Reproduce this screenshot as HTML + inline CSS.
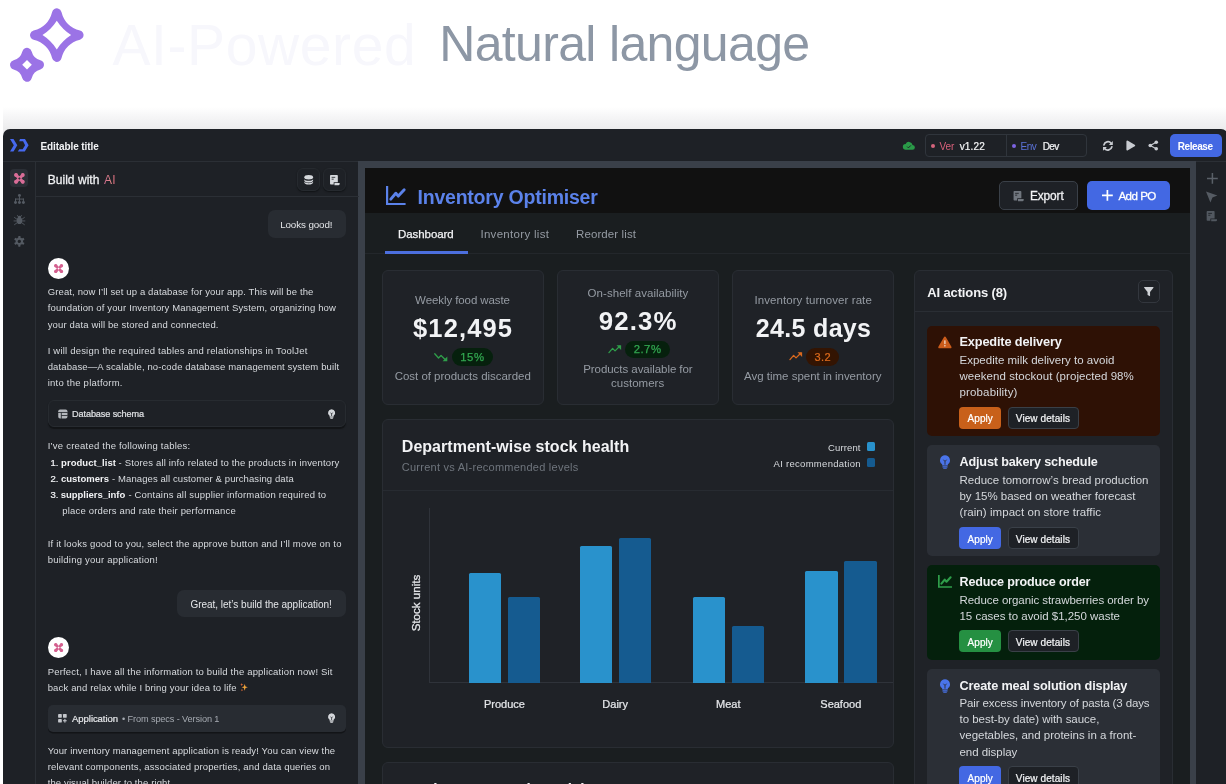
<!DOCTYPE html>
<html lang="en">
<head>
<meta charset="utf-8">
<title>AI-Powered Natural language</title>
<style>
*{box-sizing:border-box;margin:0;padding:0}
html,body{width:1226px;height:784px;overflow:hidden;background:#fff}
body{font-family:"Liberation Sans",sans-serif;color:#e6e8eb;position:relative}
.a{position:absolute}
.t{position:absolute;white-space:nowrap;line-height:1}
svg{overflow:visible}
#root{position:absolute;left:0;top:0;width:1226px;height:784px;overflow:hidden;will-change:transform}
</style>
</head>
<body>
<div id="root">
<svg class="a" style="left:0;top:0" width="100" height="95" viewBox="0 0 100 95">
<g fill="#9b73e6" stroke="#9b73e6" stroke-width="9.6" stroke-linejoin="round">
<path transform="translate(56.8 35.1)" d="M0-22Q4.5-4.5 22 0Q4.5 4.5 0 22Q-4.5 4.5-22 0Q-4.5-4.5 0-22Z"/>
<path transform="translate(27 64.8)" d="M0-12.2Q2.5-2.5 12.2 0Q2.5 2.5 0 12.2Q-2.5 2.5-12.2 0Q-2.5-2.5 0-12.2Z"/></g>
<g fill="#fff"><path transform="translate(56.8 35.1)" d="M0-14.3Q5.6-5.6 14.3 0Q5.6 5.6 0 14.3Q-5.6 5.6-14.3 0Q-5.6-5.6 0-14.3Z"/>
<path transform="translate(27 64.8)" d="M0-4.8L4.8 0L0 4.8L-4.8 0Z"/></g></svg>
<div class="t" style="left:112.40px;top:17px;font-size:57px;color:#f7f7fc;letter-spacing:0.610px;">AI-Powered</div>
<div class="t" style="left:439.20px;top:19px;font-size:50px;color:#8d97a5;letter-spacing:-0.663px;">Natural language</div>
<div class="a" style="left:3px;top:107px;width:1226px;height:26px;background:linear-gradient(#fff 0%,#f5f5f6 40%,#ececed 85%)"></div>
<div class="a" style="left:3px;top:129px;width:1225px;height:700px;background:#1e2126;border-radius:7px 7px 0 0"></div>
<div class="a" style="left:3px;top:161px;width:1223px;height:1px;background:#2b2f35;"></div>
<div class="a" style="left:35px;top:162px;width:1px;height:622px;background:#2b2f35;"></div>
<div class="a" style="left:358.2px;top:161.2px;width:837.8px;height:622.8px;background:#3a4049;"></div>
<div class="a" style="left:365px;top:168px;width:825px;height:616px;background:#1a1e20;"></div>
<div class="a" style="left:365px;top:168px;width:825px;height:45px;background:#111111;"></div>
<svg class="a" style="left:9.8px;top:139.2px;" width="18.6" height="12.4" viewBox="0 0 18.6 12.4"><g fill="#4669ee"><path d="M0 0H3.5L7.3 6.2L3.5 12.4H0L3.8 6.2Z"/><path d="M10 0H15L18.6 6.2L14.8 12.4H7.8L9.3 10.2H12.7L15.1 6.2L13.1 2.3H9.2Z"/></g></svg>
<div class="t" style="left:40.50px;top:142px;font-size:10px;color:#f2f3f5;letter-spacing:-0.096px;"><span style="font-weight:700;">Editable title</span></div>
<svg class="a" style="left:903.1px;top:140.5px;" width="11.8" height="9.8" viewBox="0 0 24 18"><path fill="#2a9a48" d="M19.4 7A7.5 7.5 0 0 0 5.3 5 6 6 0 0 0 6 17h13a5 5 0 0 0 .4-10z"/><path fill="none" stroke="#1e2126" stroke-width="2" d="M8.5 10.5l2.5 2.5 5-5"/></svg>
<div class="a" style="left:925px;top:134px;width:162px;height:22.5px;border:1px solid #30353c;border-radius:4px;"></div>
<div class="a" style="left:1006px;top:134px;width:1px;height:22.5px;background:#30353c;"></div>
<div class="a" style="left:931.4px;top:143.6px;width:4px;height:4px;background:#d4647c;border-radius:3px;"></div>
<div class="t" style="left:939.40px;top:142px;font-size:10px;color:#d9607a;letter-spacing:-0.058px;">Ver</div>
<div class="t" style="left:959.70px;top:142px;font-size:10px;color:#f2f3f5;letter-spacing:0.158px;"><span style="-webkit-text-stroke:0.22px currentColor;">v1.22</span></div>
<div class="a" style="left:1012.4px;top:143.6px;width:4px;height:4px;background:#7d63e2;border-radius:3px;"></div>
<div class="t" style="left:1020.60px;top:142px;font-size:10px;color:#5b72d8;letter-spacing:-0.567px;">Env</div>
<div class="t" style="left:1042.70px;top:142px;font-size:10px;color:#f2f3f5;letter-spacing:-0.548px;"><span style="-webkit-text-stroke:0.22px currentColor;">Dev</span></div>
<svg class="a" style="left:1102.2px;top:139.6px;" width="11.8" height="11.8" viewBox="0 0 24 24"><g transform="translate(24 0) scale(-1 1)"><g fill="none" stroke="#c9ccd1" stroke-width="3.6" stroke-linecap="round"><path d="M20 10A8.3 8.3 0 0 0 5.5 6.5"/><path d="M4 14a8.3 8.3 0 0 0 14.5 3.5"/></g><path fill="#c9ccd1" d="M2 2v8h8zM22 22v-8h-8z"/></g></svg>
<svg class="a" style="left:1125.7px;top:140px;" width="9.5" height="11" viewBox="0 0 9.5 11"><path fill="#c9ccd1" stroke="#c9ccd1" stroke-width="2" stroke-linejoin="round" d="M1.4 1.6L8.2 5.5L1.4 9.4Z"/></svg>
<svg class="a" style="left:1148px;top:140px;" width="10.5" height="11" viewBox="0 0 21 22"><g fill="#c9ccd1"><circle cx="16.5" cy="4.5" r="3.6"/><circle cx="16.5" cy="17.5" r="3.6"/><circle cx="4.5" cy="11" r="3.6"/></g><path fill="none" stroke="#c9ccd1" stroke-width="2.4" d="M16.5 4.5L4.5 11L16.5 17.5"/></svg>
<div class="a" style="left:1169.5px;top:134px;width:52px;height:23px;background:#4368e3;border-radius:5px;"></div>
<div class="t" style="left:1177.70px;top:142px;font-size:10px;color:#ffffff;letter-spacing:-0.419px;"><span style="font-weight:700;">Release</span></div>
<div class="a" style="left:9.7px;top:169.3px;width:18.8px;height:18.2px;background:#2b2f36;border-radius:4px;"></div>
<svg class="a" style="left:14px;top:172.8px;" width="10.8" height="10.8" viewBox="0 0 12 12"><g fill="none" stroke="#d96d97" stroke-width="3.4" stroke-linecap="round"><path d="M2.2 2.2L9.800 9.800M9.800 2.200L2.200 9.800"/></g><g fill="#d96d97"><circle cx="2.300" cy="2.300" r="2.200"/><circle cx="9.700" cy="2.300" r="2.200"/><circle cx="2.300" cy="9.700" r="2.200"/><circle cx="9.700" cy="9.700" r="2.200"/></g><rect x="5" y="5" width="2" height="2" fill="#2b2f36" transform="rotate(45 6 6)"/></svg>
<svg class="a" style="left:13.9px;top:193.8px;" width="10.9" height="10.2" viewBox="0 0 22 20.5"><g fill="#555b63"><circle cx="11" cy="3" r="3"/><circle cx="3" cy="17.300" r="3"/><circle cx="11" cy="17.300" r="3"/><circle cx="19" cy="17.300" r="3"/><rect x="10" y="5" width="2" height="10"/><rect x="2" y="9.200" width="18" height="2"/><rect x="2" y="9.200" width="2" height="6"/><rect x="18" y="9.200" width="2" height="6"/></g></svg>
<svg class="a" style="left:13.9px;top:215px;" width="10.9" height="10.4" viewBox="0 0 22 21"><g fill="#555b63"><ellipse cx="11" cy="11.500" rx="5.600" ry="6.800"/><circle cx="11" cy="4.600" r="3"/></g><g stroke="#555b63" stroke-width="1.800" stroke-linecap="round"><path d="M1 5l5.500 4M21 5l-5.500 4M0 12h6M22 12h-6M1 19.500l5.500-4M21 19.500l-5.500-4M7 1l2 3M15 1l-2 3"/></g></svg>
<svg class="a" style="left:14.1px;top:236px;" width="10.7" height="10.7" viewBox="0 0 22 22"><g fill="none" stroke="#545a62"><circle cx="11" cy="11" r="5.600" stroke-width="4.200"/></g><g fill="#545a62"><rect x="8.700" y="0" width="4.600" height="4.600" rx="1" transform="rotate(0 11 11)"/><rect x="8.700" y="0" width="4.600" height="4.600" rx="1" transform="rotate(60 11 11)"/><rect x="8.700" y="0" width="4.600" height="4.600" rx="1" transform="rotate(120 11 11)"/><rect x="8.700" y="0" width="4.600" height="4.600" rx="1" transform="rotate(180 11 11)"/><rect x="8.700" y="0" width="4.600" height="4.600" rx="1" transform="rotate(240 11 11)"/><rect x="8.700" y="0" width="4.600" height="4.600" rx="1" transform="rotate(300 11 11)"/></g></svg>
<div class="a" style="left:36px;top:196px;width:322.6px;height:1px;background:#2b2f35;"></div>
<div class="t" style="left:47.70px;top:174px;font-size:12px;color:#f2f3f5;letter-spacing:0.038px;"><span style="-webkit-text-stroke:0.26px currentColor;">Build with</span></div>
<div class="t" style="left:103.9px;top:173.8px;font-size:12px;letter-spacing:0.3px;background:linear-gradient(90deg,#c96a8e,#e98a8a 60%,#d9607a);-webkit-background-clip:text;background-clip:text;color:transparent">AI</div>
<div class="a" style="left:297px;top:168px;width:23px;height:23px;background:#1e2126;border:1px solid #262a2f;border-radius:6px;box-shadow:0 1px 1.5px #111316;"></div>
<div class="a" style="left:323px;top:168px;width:23px;height:23px;background:#1e2126;border:1px solid #262a2f;border-radius:6px;box-shadow:0 1px 1.5px #111316;"></div>
<svg class="a" style="left:303.9px;top:174.6px;" width="9.4" height="9.7" viewBox="0 0 18 19"><g fill="#d5d8dc"><ellipse cx="9" cy="4.6" rx="8.6" ry="4.4"/><path d="M.4 8.2c1 2 4.400 3.200 8.600 3.200s7.600-1.200 8.600-3.200v2.600c0 2.200-3.800 4-8.600 4s-8.600-1.800-8.600-4z"/><path d="M.4 12.800c1 2 4.400 3.200 8.600 3.200s7.600-1.200 8.600-3.200v2c0 2.200-3.800 4-8.600 4s-8.600-1.800-8.600-4z"/></g></svg>
<svg class="a" style="left:328.8px;top:174.8px;" width="10.4" height="10.4" viewBox="0 0 20 20"><g fill="#d5d8dc"><path d="M3.500 0h12a1.500 1.500 0 0 1 1.500 1.500v12.500h-8v4.500h-5.500a1.500 1.500 0 0 1-1.500-1.500v-15.500a1.500 1.500 0 0 1 1.500-1.500z"/><path d="M10.500 15.500h10v1.600a2.400 2.400 0 0 1-2.400 2.400h-7.600z"/></g><g stroke="#1e2126" stroke-width="1.600"><path d="M5 4.500h7M5 8h4"/></g></svg>
<div class="a" style="left:267.5px;top:210.4px;width:78.2px;height:27.3px;background:#282c32;border-radius:7px;"></div>
<div class="t" style="left:280.20px;top:220px;font-size:9.82px;color:#e4e6e9;letter-spacing:-0.120px;">Looks good!</div>
<div class="a" style="left:48.3px;top:258.1px;width:21.2px;height:21.2px;background:#ffffff;border-radius:11px;"></div>
<svg class="a" style="left:54.3px;top:264.1px;" width="9.2" height="9.2" viewBox="0 0 12 12"><g fill="none" stroke="#d4608f" stroke-width="3.4" stroke-linecap="round"><path d="M2.2 2.2L9.800 9.800M9.800 2.200L2.200 9.800"/></g><g fill="#d4608f"><circle cx="2.300" cy="2.300" r="2.200"/><circle cx="9.700" cy="2.300" r="2.200"/><circle cx="2.300" cy="9.700" r="2.200"/><circle cx="9.700" cy="9.700" r="2.200"/></g><rect x="5" y="5" width="2" height="2" fill="#ffffff" transform="rotate(45 6 6)"/></svg>
<div class="t" style="left:47.70px;top:287px;font-size:9.5px;color:#d8dbdf;letter-spacing:0.130px;">Great, now I’ll set up a database for your app. This will be the</div>
<div class="t" style="left:47.70px;top:303px;font-size:9.5px;color:#d8dbdf;letter-spacing:0.145px;">foundation of your Inventory Management System, organizing how</div>
<div class="t" style="left:47.70px;top:320px;font-size:9.5px;color:#d8dbdf;letter-spacing:0.144px;">your data will be stored and connected.</div>
<div class="t" style="left:47.70px;top:346px;font-size:9.5px;color:#d8dbdf;letter-spacing:0.198px;">I will design the required tables and relationships in ToolJet</div>
<div class="t" style="left:47.70px;top:362px;font-size:9.5px;color:#d8dbdf;letter-spacing:0.121px;">database—A scalable, no-code database management system built</div>
<div class="t" style="left:47.70px;top:378px;font-size:9.5px;color:#d8dbdf;letter-spacing:0.237px;">into the platform.</div>
<div class="a" style="left:47.7px;top:400.3px;width:298px;height:27.1px;background:#1e2126;border:1px solid #272b30;border-radius:6px;box-shadow:0 1.5px 1px #121417;"></div>
<svg class="a" style="left:58.3px;top:408.9px;" width="9.7" height="10" viewBox="0 0 19 19"><rect x="0.500" y="0.500" width="18" height="18" rx="3.500" fill="#b4b7bc"/><g stroke="#1e2126" stroke-width="1.600"><path d="M0 6.500h19M6.500 6.500v12.500M6.500 12.500h12.500"/></g></svg>
<div class="t" style="left:72.10px;top:410px;font-size:9.14px;color:#dfe1e4;letter-spacing:-0.114px;"><span style="-webkit-text-stroke:0.20px currentColor;">Database schema</span></div>
<svg class="a" style="left:328.2px;top:408.7px;" width="7.2" height="10.4" viewBox="0 0 14 19"><path fill="#d5d8dc" d="M7 0a7 7 0 0 0-4 12.700v1.800h8v-1.800a7 7 0 0 0-4-12.700z"/><rect x="3.300" y="15.600" width="7.400" height="1.700" rx=".8" fill="#d5d8dc"/><rect x="4.500" y="17.600" width="5" height="1.400" rx=".7" fill="#d5d8dc"/><path d="M5 6.500l2 2.500 2-2.500M7 9v4" stroke="#1e2126" stroke-width="1.500" fill="none"/></svg>
<div class="t" style="left:47.70px;top:441px;font-size:9.5px;color:#d8dbdf;letter-spacing:0.218px;">I’ve created the following tables:</div>
<div class="t" style="left:50.40px;top:458px;font-size:9.5px;color:#f2f3f5;letter-spacing:0.040px;"><span style="-webkit-text-stroke:0.21px currentColor;color:#f2f3f5;">1. </span><span style="font-weight:700;color:#f2f3f5;">product_list</span></div>
<div class="t" style="left:118.60px;top:458px;font-size:9.5px;color:#d8dbdf;letter-spacing:0.169px;">- Stores all info related to the products in inventory</div>
<div class="t" style="left:50.40px;top:474px;font-size:9.5px;color:#f2f3f5;"><span style="-webkit-text-stroke:0.21px currentColor;color:#f2f3f5;">2. </span><span style="font-weight:700;color:#f2f3f5;">customers</span></div>
<div class="t" style="left:112.00px;top:474px;font-size:9.5px;color:#d8dbdf;letter-spacing:0.096px;">- Manages all customer &amp; purchasing data</div>
<div class="t" style="left:50.40px;top:490px;font-size:9.5px;color:#f2f3f5;letter-spacing:-0.044px;"><span style="-webkit-text-stroke:0.21px currentColor;color:#f2f3f5;">3. </span><span style="font-weight:700;color:#f2f3f5;">suppliers_info</span></div>
<div class="t" style="left:128.40px;top:490px;font-size:9.5px;color:#d8dbdf;letter-spacing:0.188px;">- Contains all supplier information required to</div>
<div class="t" style="left:62.30px;top:506px;font-size:9.5px;color:#d8dbdf;letter-spacing:0.172px;">place orders and rate their performance</div>
<div class="t" style="left:47.70px;top:539px;font-size:9.5px;color:#d8dbdf;letter-spacing:0.178px;">If it looks good to you, select the approve button and I’ll move on to</div>
<div class="t" style="left:47.70px;top:555px;font-size:9.5px;color:#d8dbdf;letter-spacing:0.217px;">building your application!</div>
<div class="a" style="left:177.4px;top:589.5px;width:168.3px;height:27.8px;background:#282c32;border-radius:7px;"></div>
<div class="t" style="left:190.40px;top:600px;font-size:10px;color:#e4e6e9;letter-spacing:-0.018px;">Great, let’s build the application!</div>
<div class="a" style="left:48.3px;top:637.2px;width:21.2px;height:21.2px;background:#ffffff;border-radius:11px;"></div>
<svg class="a" style="left:54.3px;top:643.2px;" width="9.2" height="9.2" viewBox="0 0 12 12"><g fill="none" stroke="#d4608f" stroke-width="3.4" stroke-linecap="round"><path d="M2.2 2.2L9.800 9.800M9.800 2.200L2.200 9.800"/></g><g fill="#d4608f"><circle cx="2.300" cy="2.300" r="2.200"/><circle cx="9.700" cy="2.300" r="2.200"/><circle cx="2.300" cy="9.700" r="2.200"/><circle cx="9.700" cy="9.700" r="2.200"/></g><rect x="5" y="5" width="2" height="2" fill="#ffffff" transform="rotate(45 6 6)"/></svg>
<div class="t" style="left:47.70px;top:667px;font-size:9.5px;color:#d8dbdf;letter-spacing:0.181px;">Perfect, I have all the information to build the application now! Sit</div>
<div class="t" style="left:47.70px;top:683px;font-size:9.5px;color:#d8dbdf;letter-spacing:0.147px;">back and relax while I bring your idea to life</div>
<svg class="a" style="left:239.9px;top:683.2px;" width="8" height="8.6" viewBox="0 0 17 19"><path fill="#f0a23a" d="M10 2l1.800 5.700 5.200 1.800-5.200 1.800L10 17l-1.800-5.700L3 9.500l5.200-1.800z"/><path fill="#e8703a" d="M3.500 0l.9 2.600 2.600.9-2.600.9-.9 2.600-.9-2.600L0 3.500l2.600-.9zM4 13l.7 2 2 .7-2 .7-.7 2-.7-2-2-.7 2-.7z"/></svg>
<div class="a" style="left:47.7px;top:705.2px;width:298px;height:27px;background:#282c32;border-radius:5px;box-shadow:0 1.5px 0 #121417;"></div>
<svg class="a" style="left:58.3px;top:714.2px;" width="9" height="8.8" viewBox="0 0 18 18"><g fill="#c4c7cc"><rect x="0" y="0" width="7.600" height="7.600" rx="1"/><rect x="10" y="0" width="7.600" height="7.600" rx="1"/><rect x="0" y="10" width="7.600" height="7.600" rx="1"/><rect x="12.800" y="10" width="2.200" height="7.600"/><rect x="10" y="12.700" width="7.600" height="2.200"/></g></svg>
<div class="t" style="left:72.10px;top:714px;font-size:9.5px;color:#e4e6e9;letter-spacing:-0.058px;"><span style="-webkit-text-stroke:0.21px currentColor;">Application</span></div>
<div class="t" style="left:122.00px;top:715px;font-size:9.18px;color:#a6abb2;letter-spacing:-0.114px;">• From specs - Version 1</div>
<svg class="a" style="left:328.2px;top:713.1px;" width="7.2" height="10.4" viewBox="0 0 14 19"><path fill="#d5d8dc" d="M7 0a7 7 0 0 0-4 12.700v1.800h8v-1.800a7 7 0 0 0-4-12.700z"/><rect x="3.300" y="15.600" width="7.400" height="1.700" rx=".8" fill="#d5d8dc"/><rect x="4.500" y="17.600" width="5" height="1.400" rx=".7" fill="#d5d8dc"/><path d="M5 6.500l2 2.500 2-2.500M7 9v4" stroke="#282c32" stroke-width="1.500" fill="none"/></svg>
<div class="t" style="left:47.70px;top:746px;font-size:9.5px;color:#d8dbdf;letter-spacing:0.133px;">Your inventory management application is ready! You can view the</div>
<div class="t" style="left:47.70px;top:762px;font-size:9.5px;color:#d8dbdf;letter-spacing:0.149px;">relevant components, associated properties, and data queries on</div>
<div class="t" style="left:47.70px;top:778px;font-size:9.5px;color:#d8dbdf;letter-spacing:0.120px;">the visual builder to the right.</div>
<svg class="a" style="left:386.4px;top:186.4px;" width="19.6" height="19.1" viewBox="0 0 19.6 19.1"><g fill="none" stroke="#5b82ea" stroke-width="2.200"><path d="M1.100 0V18H19.600"/><path d="M4.800 13.200L9.800 7.200L12.300 10.100L18.200 3.800" stroke-linejoin="round" stroke-linecap="round" stroke-width="2.900"/></g></svg>
<div class="t" style="left:417.50px;top:188px;font-size:19.5px;color:#5b82ea;letter-spacing:-0.218px;"><span style="font-weight:700;">Inventory Optimiser</span></div>
<div class="a" style="left:999px;top:181px;width:79px;height:29.3px;background:#1e2126;border:1px solid #3a4048;border-radius:5px;"></div>
<svg class="a" style="left:1012.7px;top:190.7px;" width="11" height="10.4" viewBox="0 0 21 20"><g fill="#70767e"><path d="M2.500 0h12a1.500 1.500 0 0 1 1.500 1.500v12.500h-8v4.500h-5.500a1.500 1.500 0 0 1-1.500-1.500v-15.500a1.500 1.500 0 0 1 1.500-1.500z"/><path d="M9.500 15.500h11v1.600a2.400 2.400 0 0 1-2.400 2.400h-8.600z"/></g><g stroke="#1e2126" stroke-width="1.600"><path d="M4 4.500h7M4 8h4"/></g></svg>
<div class="t" style="left:1030.00px;top:191px;font-size:11.91px;color:#f2f3f5;letter-spacing:-0.144px;"><span style="-webkit-text-stroke:0.26px currentColor;">Export</span></div>
<div class="a" style="left:1087.4px;top:181px;width:82.6px;height:29.3px;background:#4368e3;border-radius:5px;"></div>
<svg class="a" style="left:1101.5px;top:190.4px;" width="10.8" height="10.8" viewBox="0 0 10.8 10.8"><path d="M5.400 0V10.800M0 5.400H10.800" stroke="#fff" stroke-width="1.700"/></svg>
<div class="t" style="left:1118.40px;top:190px;font-size:11.6px;color:#ffffff;letter-spacing:-0.522px;"><span style="-webkit-text-stroke:0.26px currentColor;">Add PO</span></div>
<div class="a" style="left:365px;top:253px;width:825px;height:1px;background:#23272b;"></div>
<div class="a" style="left:384.5px;top:250.6px;width:83.2px;height:3.4px;background:#4c6fde;"></div>
<div class="t" style="left:398.00px;top:229px;font-size:11.5px;color:#f2f3f5;letter-spacing:-0.071px;"><span style="-webkit-text-stroke:0.25px currentColor;">Dashboard</span></div>
<div class="t" style="left:480.40px;top:229px;font-size:11.5px;color:#959ba3;letter-spacing:0.311px;">Inventory list</div>
<div class="t" style="left:576.00px;top:229px;font-size:11.5px;color:#959ba3;letter-spacing:0.108px;">Reorder list</div>
<svg class="a" style="left:1206.5px;top:172.7px;" width="10.8" height="10.8" viewBox="0 0 10.8 10.8"><path d="M5.400 0V10.800M0 5.400H10.800" stroke="#5a6068" stroke-width="1.500"/></svg>
<svg class="a" style="left:1206px;top:191.4px;" width="11.4" height="11.4" viewBox="0 0 22 22"><path fill="#555b63" d="M0 1L22 8.500L12.500 12.500L8.500 22Z"/></svg>
<svg class="a" style="left:1206px;top:211.4px;" width="11.4" height="10.6" viewBox="0 0 21 20"><g fill="#525860"><path d="M2.500 0h12a1.500 1.500 0 0 1 1.500 1.500v12.500h-8v4.500h-5.500a1.500 1.500 0 0 1-1.500-1.500v-15.500a1.500 1.500 0 0 1 1.500-1.500z"/><path d="M9.500 15.500h11v1.600a2.400 2.400 0 0 1-2.400 2.400h-8.600z"/></g><g stroke="#1e2126" stroke-width="1.600"><path d="M4 4.500h7M4 8h4"/></g></svg>
<div class="a" style="left:381.7px;top:270.2px;width:162.2px;height:135.2px;background:#1f2227;border:1px solid #292d33;border-radius:6px;"></div>
<div class="a" style="left:556.9px;top:270.2px;width:162.2px;height:135.2px;background:#1f2227;border:1px solid #292d33;border-radius:6px;"></div>
<div class="a" style="left:732.2px;top:270.2px;width:162.2px;height:135.2px;background:#1f2227;border:1px solid #292d33;border-radius:6px;"></div>
<div class="t" style="left:415.10px;top:295px;font-size:11.5px;color:#959ba3;letter-spacing:-0.088px;">Weekly food waste</div>
<div class="t" style="left:413.00px;top:316px;font-size:25.52px;color:#f2f3f5;letter-spacing:1.125px;"><span style="font-weight:700;">$12,495</span></div>
<svg class="a" style="left:433.9px;top:352.6px;" width="13.6" height="8.6" viewBox="0 0 27 17"><path fill="none" stroke="#2f9e4a" stroke-width="2.600" stroke-linejoin="round" stroke-linecap="round" d="M1.500 1.500L9 10L14 5L23.500 14.500"/><path fill="#2f9e4a" d="M26.500 7V16.500H17Z"/></svg>
<div class="a" style="left:451.5px;top:347.5px;width:41.4px;height:18px;background:#06200d;border-radius:9px;"></div>
<div class="t" style="left:460.30px;top:352px;font-size:11.34px;color:#32a750;letter-spacing:0.495px;"><span style="-webkit-text-stroke:0.25px currentColor;">15%</span></div>
<div class="t" style="left:394.70px;top:371px;font-size:11.5px;color:#959ba3;letter-spacing:-0.028px;">Cost of products discarded</div>
<div class="t" style="left:587.60px;top:288px;font-size:11.5px;color:#959ba3;letter-spacing:0.049px;">On-shelf availability</div>
<div class="t" style="left:598.70px;top:309px;font-size:25.85px;color:#f2f3f5;letter-spacing:1.125px;"><span style="font-weight:700;">92.3%</span></div>
<svg class="a" style="left:607.5px;top:345.1px;" width="13.6" height="8.3" viewBox="0 0 27 17"><path fill="none" stroke="#2f9e4a" stroke-width="2.600" stroke-linejoin="round" stroke-linecap="round" d="M1.500 15.500L9 7L14 12L23.500 2.500"/><path fill="#2f9e4a" d="M26.500 10V0.500H17Z"/></svg>
<div class="a" style="left:625.2px;top:340.7px;width:45.2px;height:17.7px;background:#06200d;border-radius:9px;"></div>
<div class="t" style="left:633.70px;top:344px;font-size:11.32px;color:#32a750;letter-spacing:0.495px;"><span style="-webkit-text-stroke:0.25px currentColor;">2.7%</span></div>
<div class="t" style="left:583.20px;top:364px;font-size:11.5px;color:#959ba3;letter-spacing:-0.052px;">Products available for</div>
<div class="t" style="left:611.00px;top:378px;font-size:11.5px;color:#959ba3;letter-spacing:0.019px;">customers</div>
<div class="t" style="left:754.40px;top:295px;font-size:11.5px;color:#959ba3;letter-spacing:0.077px;">Inventory turnover rate</div>
<div class="t" style="left:755.80px;top:316px;font-size:25px;color:#f2f3f5;letter-spacing:0.326px;"><span style="font-weight:700;">24.5 days</span></div>
<svg class="a" style="left:788.6px;top:352.3px;" width="13.6" height="8.3" viewBox="0 0 27 17"><path fill="none" stroke="#d9691e" stroke-width="2.600" stroke-linejoin="round" stroke-linecap="round" d="M1.500 15.500L9 7L14 12L23.500 2.500"/><path fill="#d9691e" d="M26.500 10V0.500H17Z"/></svg>
<div class="a" style="left:806.3px;top:348px;width:33.2px;height:17.7px;background:#331402;border-radius:9px;"></div>
<div class="t" style="left:814.60px;top:352px;font-size:11px;color:#dc6a1c;letter-spacing:0.402px;"><span style="-webkit-text-stroke:0.24px currentColor;">3.2</span></div>
<div class="t" style="left:744.10px;top:371px;font-size:11.5px;color:#959ba3;letter-spacing:-0.018px;">Avg time spent in inventory</div>
<div class="a" style="left:381.5px;top:418.6px;width:512.5px;height:329.1px;background:#1f2227;border:1px solid #292d33;border-radius:6px;"></div>
<div class="t" style="left:401.80px;top:439px;font-size:16px;color:#f2f3f5;letter-spacing:0.025px;"><span style="font-weight:700;">Department-wise stock health</span></div>
<div class="t" style="left:401.80px;top:462px;font-size:11px;color:#6f757d;letter-spacing:0.247px;">Current vs AI-recommended levels</div>
<div class="t" style="left:828.10px;top:443px;font-size:9.5px;color:#d8dbdf;letter-spacing:0.119px;">Current</div>
<div class="t" style="left:773.60px;top:459px;font-size:9.5px;color:#d8dbdf;letter-spacing:0.283px;">AI recommendation</div>
<div class="a" style="left:866.6px;top:442px;width:8.6px;height:8.6px;background:#2992cc;border-radius:1.5px;"></div>
<div class="a" style="left:866.6px;top:458.4px;width:8.6px;height:8.6px;background:#155b90;border-radius:1.5px;"></div>
<div class="a" style="left:382.5px;top:489.7px;width:510.5px;height:1px;background:#272b31;"></div>
<div class="a" style="left:429.2px;top:507.8px;width:1px;height:175.6px;background:#2f333a;"></div>
<div class="a" style="left:429.2px;top:682.4px;width:463.8px;height:1px;background:#2f333a;"></div>
<div class="a" style="left:469.2px;top:572.7px;width:32px;height:109.9px;background:#2992cc;border-radius:1.5px 1.5px 0 0;"></div>
<div class="a" style="left:507.9px;top:597px;width:32.4px;height:85.6px;background:#155b90;border-radius:1.5px 1.5px 0 0;"></div>
<div class="a" style="left:579.9px;top:546px;width:32px;height:136.6px;background:#2992cc;border-radius:1.5px 1.5px 0 0;"></div>
<div class="a" style="left:618.5px;top:538.3px;width:32.5px;height:144.3px;background:#155b90;border-radius:1.5px 1.5px 0 0;"></div>
<div class="a" style="left:693px;top:597px;width:32.4px;height:85.6px;background:#2992cc;border-radius:1.5px 1.5px 0 0;"></div>
<div class="a" style="left:732.1px;top:626.1px;width:32.4px;height:56.5px;background:#155b90;border-radius:1.5px 1.5px 0 0;"></div>
<div class="a" style="left:805px;top:571.2px;width:32.5px;height:111.4px;background:#2992cc;border-radius:1.5px 1.5px 0 0;"></div>
<div class="a" style="left:844.2px;top:560.7px;width:32.4px;height:121.9px;background:#155b90;border-radius:1.5px 1.5px 0 0;"></div>
<div class="t" style="left:484.01px;top:699px;font-size:11px;color:#e4e6e9;"><span style="-webkit-text-stroke:0.24px currentColor;">Produce</span></div>
<div class="t" style="left:602.36px;top:699px;font-size:11px;color:#e4e6e9;"><span style="-webkit-text-stroke:0.24px currentColor;">Dairy</span></div>
<div class="t" style="left:716.07px;top:699px;font-size:11px;color:#e4e6e9;"><span style="-webkit-text-stroke:0.24px currentColor;">Meat</span></div>
<div class="t" style="left:820.31px;top:699px;font-size:11px;color:#e4e6e9;"><span style="-webkit-text-stroke:0.24px currentColor;">Seafood</span></div>
<div class="t" style="left:415.8px;top:603.2px;font-size:11.6px;color:#e4e6e9;-webkit-text-stroke:0.3px currentColor;transform:translate(-50%,-50%) rotate(-90deg)">Stock units</div>
<div class="a" style="left:381.5px;top:761.6px;width:512.5px;height:38.4px;background:#1f2227;border:1px solid #292d33;border-radius:6px;"></div>
<div class="t" style="left:401.80px;top:781px;font-size:15.32px;color:#f2f3f5;letter-spacing:-0.192px;"><span style="font-weight:700;">Freshness &amp; stockout risk</span></div>
<div class="a" style="left:914.3px;top:270.2px;width:258.7px;height:529.8px;background:#1f2227;border:1px solid #292d33;border-radius:6px;"></div>
<div class="t" style="left:927.20px;top:286px;font-size:13px;color:#f2f3f5;letter-spacing:-0.125px;"><span style="font-weight:700;">AI actions (8)</span></div>
<div class="a" style="left:1137.6px;top:280.3px;width:22.4px;height:22.4px;border:1px solid #33373e;border-radius:5px;"></div>
<svg class="a" style="left:1144px;top:286.6px;" width="9.6" height="10" viewBox="0 0 19 20"><path fill="#cfd2d6" d="M1 0h17a1 1 0 0 1 .8 1.600L12 10v8.500l-5-2.500V10L.2 1.600A1 1 0 0 1 1 0z"/></svg>
<div class="a" style="left:915.3px;top:310.6px;width:256.7px;height:1px;background:#2a2e34;"></div>
<div class="a" style="left:927px;top:326px;width:233.2px;height:110px;background:#2e1105;border-radius:5px;"></div>
<svg class="a" style="left:937.7px;top:335.5px;" width="13.8" height="12.7" viewBox="0 0 22 20"><path fill="#cb5c1b" d="M11 .8a1.600 1.600 0 0 1 1.400.8l9 15.600a1.600 1.600 0 0 1-1.400 2.400H2a1.600 1.600 0 0 1-1.400-2.400l9-15.600A1.600 1.600 0 0 1 11 .8z"/><rect x="9.900" y="6.500" width="2.200" height="6.500" rx="1" fill="#f1d6c4"/><circle cx="11" cy="15.600" r="1.300" fill="#f1d6c4"/></svg>
<div class="t" style="left:959.50px;top:336px;font-size:12.76px;color:#f2f3f5;letter-spacing:-0.156px;"><span style="font-weight:700;">Expedite delivery</span></div>
<div class="t" style="left:959.50px;top:355px;font-size:11.5px;color:#d5d8dc;letter-spacing:0.007px;">Expedite milk delivery to avoid</div>
<div class="t" style="left:959.50px;top:371px;font-size:11.5px;color:#d5d8dc;letter-spacing:0.056px;">weekend stockout (projected 98%</div>
<div class="t" style="left:959.50px;top:387px;font-size:11.5px;color:#d5d8dc;letter-spacing:0.150px;">probability)</div>
<div class="a" style="left:959px;top:406.7px;width:42.4px;height:22.4px;background:#c8601a;border-radius:4px;"></div>
<div class="t" style="left:967.60px;top:414px;font-size:10px;color:#ffffff;letter-spacing:0.046px;"><span style="-webkit-text-stroke:0.22px currentColor;">Apply</span></div>
<div class="a" style="left:1007.8px;top:406.7px;width:71px;height:22.4px;background:#1e2126;border:1px solid #3a4048;border-radius:4px;"></div>
<div class="t" style="left:1015.80px;top:414px;font-size:10px;color:#f2f3f5;letter-spacing:0.092px;"><span style="-webkit-text-stroke:0.22px currentColor;">View details</span></div>
<div class="a" style="left:927px;top:445px;width:233.2px;height:110.6px;background:#2b2f36;border-radius:5px;"></div>
<svg class="a" style="left:939.8px;top:454.8px;" width="10" height="14" viewBox="0 0 14 19"><path fill="#4a74ea" d="M7 0a7 7 0 0 0-4 12.700v1.800h8v-1.800a7 7 0 0 0-4-12.700z"/><rect x="3.300" y="15.600" width="7.400" height="1.700" rx=".8" fill="#4a74ea"/><rect x="4.500" y="17.600" width="5" height="1.400" rx=".7" fill="#4a74ea"/><path d="M4.800 6.300l2.200 2.500 2.200-2.500M7 8.800v4.500" stroke="#2b2f36" stroke-width="1.300" fill="none"/></svg>
<div class="t" style="left:959.50px;top:456px;font-size:12.61px;color:#f2f3f5;letter-spacing:-0.156px;"><span style="font-weight:700;">Adjust bakery schedule</span></div>
<div class="t" style="left:959.50px;top:475px;font-size:11.5px;color:#d5d8dc;letter-spacing:0.019px;">Reduce tomorrow’s bread production</div>
<div class="t" style="left:959.50px;top:491px;font-size:11.5px;color:#d5d8dc;letter-spacing:-0.039px;">by 15% based on weather forecast</div>
<div class="t" style="left:959.50px;top:507px;font-size:11.5px;color:#d5d8dc;letter-spacing:0.060px;">(rain) impact on store traffic</div>
<div class="a" style="left:959px;top:526.9px;width:42.4px;height:22.4px;background:#4368e3;border-radius:4px;"></div>
<div class="t" style="left:967.60px;top:535px;font-size:10px;color:#ffffff;letter-spacing:0.046px;"><span style="-webkit-text-stroke:0.22px currentColor;">Apply</span></div>
<div class="a" style="left:1007.8px;top:526.9px;width:71px;height:22.4px;background:#1e2126;border:1px solid #3a4048;border-radius:4px;"></div>
<div class="t" style="left:1015.80px;top:535px;font-size:10px;color:#f2f3f5;letter-spacing:0.092px;"><span style="-webkit-text-stroke:0.22px currentColor;">View details</span></div>
<div class="a" style="left:927px;top:565px;width:233.2px;height:95.2px;background:#04200c;border-radius:5px;"></div>
<svg class="a" style="left:938.2px;top:575.4px;" width="14" height="12.8" viewBox="0 0 14 12.800"><g fill="none" stroke="#2f9e4a" stroke-width="1.700"><path d="M.85 0V12H14"/><path d="M3.400 8.600L6.700 4.600L8.500 6.700L12.600 2.300" stroke-linejoin="round" stroke-linecap="round" stroke-width="2.100"/></g></svg>
<div class="t" style="left:959.50px;top:576px;font-size:12.56px;color:#f2f3f5;letter-spacing:-0.156px;"><span style="font-weight:700;">Reduce produce order</span></div>
<div class="t" style="left:959.50px;top:595px;font-size:11.5px;color:#d5d8dc;letter-spacing:-0.065px;">Reduce organic strawberries order by</div>
<div class="t" style="left:959.50px;top:611px;font-size:11.5px;color:#d5d8dc;letter-spacing:-0.021px;">15 cases to avoid $1,250 waste</div>
<div class="a" style="left:959px;top:630px;width:42.4px;height:22.4px;background:#259042;border-radius:4px;"></div>
<div class="t" style="left:967.60px;top:638px;font-size:10px;color:#ffffff;letter-spacing:0.046px;"><span style="-webkit-text-stroke:0.22px currentColor;">Apply</span></div>
<div class="a" style="left:1007.8px;top:630px;width:71px;height:22.4px;background:#1e2126;border:1px solid #3a4048;border-radius:4px;"></div>
<div class="t" style="left:1015.80px;top:638px;font-size:10px;color:#f2f3f5;letter-spacing:0.092px;"><span style="-webkit-text-stroke:0.22px currentColor;">View details</span></div>
<div class="a" style="left:927px;top:669px;width:233.2px;height:131px;background:#2b2f36;border-radius:5px;"></div>
<svg class="a" style="left:939.8px;top:678.5px;" width="10" height="14" viewBox="0 0 14 19"><path fill="#4a74ea" d="M7 0a7 7 0 0 0-4 12.700v1.800h8v-1.800a7 7 0 0 0-4-12.700z"/><rect x="3.300" y="15.600" width="7.400" height="1.700" rx=".8" fill="#4a74ea"/><rect x="4.500" y="17.600" width="5" height="1.400" rx=".7" fill="#4a74ea"/><path d="M4.800 6.300l2.200 2.500 2.200-2.500M7 8.800v4.500" stroke="#2b2f36" stroke-width="1.300" fill="none"/></svg>
<div class="t" style="left:959.50px;top:680px;font-size:12.7px;color:#f2f3f5;letter-spacing:-0.156px;"><span style="font-weight:700;">Create meal solution display</span></div>
<div class="t" style="left:959.50px;top:698px;font-size:11.5px;color:#d5d8dc;letter-spacing:-0.114px;">Pair excess inventory of pasta (3 days</div>
<div class="t" style="left:959.50px;top:714px;font-size:11.5px;color:#d5d8dc;letter-spacing:-0.027px;">to best-by date) with sauce,</div>
<div class="t" style="left:959.50px;top:730px;font-size:11.5px;color:#d5d8dc;letter-spacing:-0.006px;">vegetables, and proteins in a front-</div>
<div class="t" style="left:959.50px;top:747px;font-size:11.5px;color:#d5d8dc;letter-spacing:-0.039px;">end display</div>
<div class="a" style="left:959px;top:766.4px;width:42.4px;height:22.4px;background:#4368e3;border-radius:4px;"></div>
<div class="t" style="left:967.60px;top:774px;font-size:10px;color:#ffffff;letter-spacing:0.046px;"><span style="-webkit-text-stroke:0.22px currentColor;">Apply</span></div>
<div class="a" style="left:1007.8px;top:766.4px;width:71px;height:22.4px;background:#1e2126;border:1px solid #3a4048;border-radius:4px;"></div>
<div class="t" style="left:1015.80px;top:774px;font-size:10px;color:#f2f3f5;letter-spacing:0.092px;"><span style="-webkit-text-stroke:0.22px currentColor;">View details</span></div>
</div>
</body>
</html>
